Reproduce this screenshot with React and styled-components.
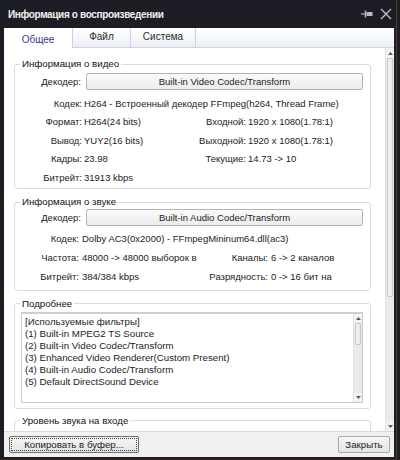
import React from 'react';
import styled, { createGlobalStyle } from 'styled-components';

const Global = createGlobalStyle`
  html, body { margin: 0; padding: 0; background: #1d1d26; }
  body { font-family: "Liberation Sans", Arial, sans-serif; font-size: 9.5px; color: #1b1b1b; }
  * { box-sizing: border-box; }
`;

const Window = styled.div`
  width: 400px;
  height: 460px;
  background: #1d1d26;
  display: flex;
  flex-direction: column;
  padding: 0 6px 3px 4px;
  box-shadow: inset -3px 0 0 #1d1d26, inset -4px 0 0 #5a3c22, inset 0 -1px 0 #3a2a1c;
`;

const TitleBar = styled.div`
  height: 28px;
  flex: none;
  display: flex;
  align-items: center;
  padding: 0 2px 0 4px;
`;

const Title = styled.div`
  flex: 1;
  color: #f2f2f2;
  font-weight: bold;
  font-size: 10px;
  letter-spacing: -0.35px;
`;

const TitleIcons = styled.div`
  display: flex;
  align-items: center;
  gap: 7px;
`;

const Client = styled.div`
  flex: 1;
  min-height: 0;
  display: flex;
  flex-direction: column;
  background: #ffffff;
`;

const TabStrip = styled.div`
  height: 20px;
  flex: none;
  display: flex;
  background: linear-gradient(#ffffff, #eceff7);
  border-bottom: 1px solid #cfd3dc;
`;

const Tab = styled.div`
  width: ${p => p.$w}px;
  display: flex;
  align-items: center;
  justify-content: center;
  border-right: 1px solid #cdd2dc;
  color: ${p => (p.$active ? '#2e3d8e' : '#2a2a2a')};
  background: ${p => (p.$active ? '#ffffff' : 'transparent')};
  margin-bottom: ${p => (p.$active ? '-1px' : '0')};
  padding-top: ${p => (p.$active ? '2px' : '0')};
  padding-bottom: ${p => (p.$active ? '0' : '3px')};
  font-size: 10px;
`;

const Body = styled.div`
  flex: 1;
  min-height: 0;
  display: flex;
`;

const ScrollArea = styled.div`
  flex: 1;
  min-width: 0;
  overflow: hidden;
  padding: 9px 14px 0 10px;
`;

const Scrollbar = styled.div`
  width: ${p => p.$w}px;
  flex: none;
  display: flex;
  flex-direction: column;
  background: #eaeaea;
  border-left: 1px solid #e2e2e2;
`;

const ArrowBox = styled.div`
  height: ${p => p.$h}px;
  flex: none;
  display: flex;
  align-items: center;
  justify-content: center;
  background: #f2f2f2;
`;

const Thumb = styled.div`
  height: ${p => p.$h}px;
  flex: none;
  margin: 0 1px;
  background: linear-gradient(90deg, #f4f4f4, #e6e6e6);
  border: 1px solid #c8c8c8;
  border-radius: 1px;
`;

const Track = styled.div`
  flex: 1;
`;

const Group = styled.fieldset`
  margin: ${p => p.$mt || 0}px 0 0 0;
  padding: 0;
  border: 1px solid #d8dce4;
  border-radius: 3px;
  min-width: 0;
`;

const Legend = styled.legend`
  margin-left: 5px;
  padding: 0 2px;
  line-height: 14px;
  font-size: 9.7px;
  color: #111;
`;

const DecoderRow = styled.div`
  display: grid;
  grid-template-columns: 66px 1fr;
  column-gap: 5px;
  align-items: center;
  padding-right: 7px;
  margin-top: ${p => p.$mt}px;
`;

const DecoderButton = styled.div`
  height: 17px;
  display: flex;
  align-items: center;
  justify-content: center;
  border: 1px solid #b4b4b4;
  border-radius: 2px;
  background: linear-gradient(#fafafa, #ececec);
  color: #1b1b1b;
`;

const InfoGrid = styled.div`
  display: grid;
  grid-template-columns: ${p => p.$cols};
  grid-auto-rows: ${p => p.$row}px;
  column-gap: ${p => p.$gap}px;
  align-items: center;
  margin-top: ${p => p.$mt}px;
  padding-bottom: ${p => p.$pb}px;
  white-space: nowrap;
`;

const Label = styled.div`
  justify-self: end;
  white-space: nowrap;
  color: #1b1b1b;
`;

const Value = styled.div`
  white-space: nowrap;
  grid-column: ${p => p.$span || 'auto'};
  color: #1b1b1b;
`;

const ListBox = styled.div`
  height: 91px;
  margin: 1px 7px 5px 6px;
  display: flex;
  border: 1px solid #c6cad2;
  border-top: 2px solid #cfcfcf;
`;

const Lines = styled.div`
  flex: 1;
  padding: 2px 3px;
  line-height: 12px;
  font-size: 9.7px;
  overflow: hidden;
  white-space: nowrap;
`;

const GroupFiller = styled.div`
  height: 40px;
`;

const BottomBar = styled.div`
  height: 26px;
  flex: none;
  display: flex;
  align-items: center;
  justify-content: space-between;
  padding: 0 4px 0 5px;
  background: #f0f0f0;
  border-top: 1px solid #dadada;
`;

const Button = styled.button`
  height: 17px;
  width: ${p => p.$w}px;
  padding: 0;
  font-family: inherit;
  font-size: 9.7px;
  color: #1b1b1b;
  border: 1px solid ${p => (p.$focus ? '#6f6f6f' : '#a9a9a9')};
  border-radius: 2px;
  background: linear-gradient(#f6f6f6, #e4e4e4);
  outline: ${p => (p.$focus ? '1px dotted #444' : 'none')};
  outline-offset: -3px;
`;

const Arrow = ({ up }) => (
  <svg width="5" height="3" viewBox="0 0 5 3">
    <path d={up ? 'M0 3 L2.5 0 L5 3 Z' : 'M0 0 L2.5 3 L5 0 Z'} fill="#5a5a5a" />
  </svg>
);

const PinIcon = () => (
  <svg width="12" height="8" viewBox="0 0 12 8">
    <path d="M0 4 H4" stroke="#bdbdbd" strokeWidth="1.2" />
    <path d="M4.5 0.5 V7.5" stroke="#bdbdbd" strokeWidth="1.4" />
    <rect x="5.5" y="2" width="6" height="4" fill="#bdbdbd" />
  </svg>
);

const CloseIcon = () => (
  <svg width="12" height="12" viewBox="0 0 12 12">
    <path d="M1 1 L11 11 M11 1 L1 11" stroke="#c4c4c4" strokeWidth="1.3" />
  </svg>
);

const filters = [
  '[Используемые фильтры]',
  '(1) Built-in MPEG2 TS Source',
  '(2) Built-in Video Codec/Transform',
  '(3) Enhanced Video Renderer(Custom Present)',
  '(4) Built-in Audio Codec/Transform',
  '(5) Default DirectSound Device',
];

export default function App() {
  return (
    <>
      <Global />
      <Window>
        <TitleBar>
          <Title>Информация о воспроизведении</Title>
          <TitleIcons>
            <PinIcon />
            <CloseIcon />
          </TitleIcons>
        </TitleBar>
        <Client>
          <TabStrip>
            <Tab $w={69} $active>Общее</Tab>
            <Tab $w={58}>Файл</Tab>
            <Tab $w={65}>Система</Tab>
          </TabStrip>
          <Body>
            <ScrollArea>
              <Group>
                <Legend>Информация о видео</Legend>
                <DecoderRow $mt={2}>
                  <Label>Декодер:</Label>
                  <DecoderButton>Built-in Video Codec/Transform</DecoderButton>
                </DecoderRow>
                <InfoGrid $cols="67px 110px 50px 1fr" $gap={2} $row={18.5} $mt={4} $pb={1.5}>
                  <Label>Кодек:</Label>
                  <Value $span="2 / -1">H264 - Встроенный декодер FFmpeg(h264, Thread Frame)</Value>
                  <Label>Формат:</Label>
                  <Value>H264(24 bits)</Value>
                  <Label>Входной:</Label>
                  <Value>1920 x 1080(1.78:1)</Value>
                  <Label>Вывод:</Label>
                  <Value>YUY2(16 bits)</Value>
                  <Label>Выходной:</Label>
                  <Value>1920 x 1080(1.78:1)</Value>
                  <Label>Кадры:</Label>
                  <Value>23.98</Value>
                  <Label>Текущие:</Label>
                  <Value>14.73 -&gt; 10</Value>
                  <Label>Битрейт:</Label>
                  <Value $span="2 / -1">31913 kbps</Value>
                </InfoGrid>
              </Group>

              <Group $mt={6}>
                <Legend>Информация о звуке</Legend>
                <DecoderRow $mt={0}>
                  <Label>Декодер:</Label>
                  <DecoderButton>Built-in Audio Codec/Transform</DecoderButton>
                </DecoderRow>
                <InfoGrid $cols="64px 113px 70px 1fr" $gap={3} $row={19} $mt={2.5} $pb={4}>
                  <Label>Кодек:</Label>
                  <Value $span="2 / -1">Dolby AC3(0x2000) - FFmpegMininum64.dll(ac3)</Value>
                  <Label>Частота:</Label>
                  <Value>48000 -&gt; 48000 выборок в</Value>
                  <Label>Каналы:</Label>
                  <Value>6 -&gt; 2 каналов</Value>
                  <Label>Битрейт:</Label>
                  <Value>384/384 kbps</Value>
                  <Label>Разрядность:</Label>
                  <Value>0 -&gt; 16 бит на</Value>
                </InfoGrid>
              </Group>

              <Group $mt={6}>
                <Legend>Подробнее</Legend>
                <ListBox>
                  <Lines>
                    {filters.map(f => (
                      <div key={f}>{f}</div>
                    ))}
                  </Lines>
                  <Scrollbar $w={9}>
                    <ArrowBox $h={9}><Arrow up /></ArrowBox>
                    <Thumb $h={22} />
                    <Track />
                    <ArrowBox $h={9}><Arrow /></ArrowBox>
                  </Scrollbar>
                </ListBox>
              </Group>

              <Group $mt={5}>
                <Legend>Уровень звука на входе</Legend>
                <GroupFiller />
              </Group>
            </ScrollArea>
            <Scrollbar $w={9}>
              <ArrowBox $h={10}><Arrow up /></ArrowBox>
              <Thumb $h={239} />
              <Track />
              <ArrowBox $h={10}><Arrow /></ArrowBox>
            </Scrollbar>
          </Body>
          <BottomBar>
            <Button $w={130} $focus>Копировать в буфер...</Button>
            <Button $w={52}>Закрыть</Button>
          </BottomBar>
        </Client>
      </Window>
    </>
  );
}
